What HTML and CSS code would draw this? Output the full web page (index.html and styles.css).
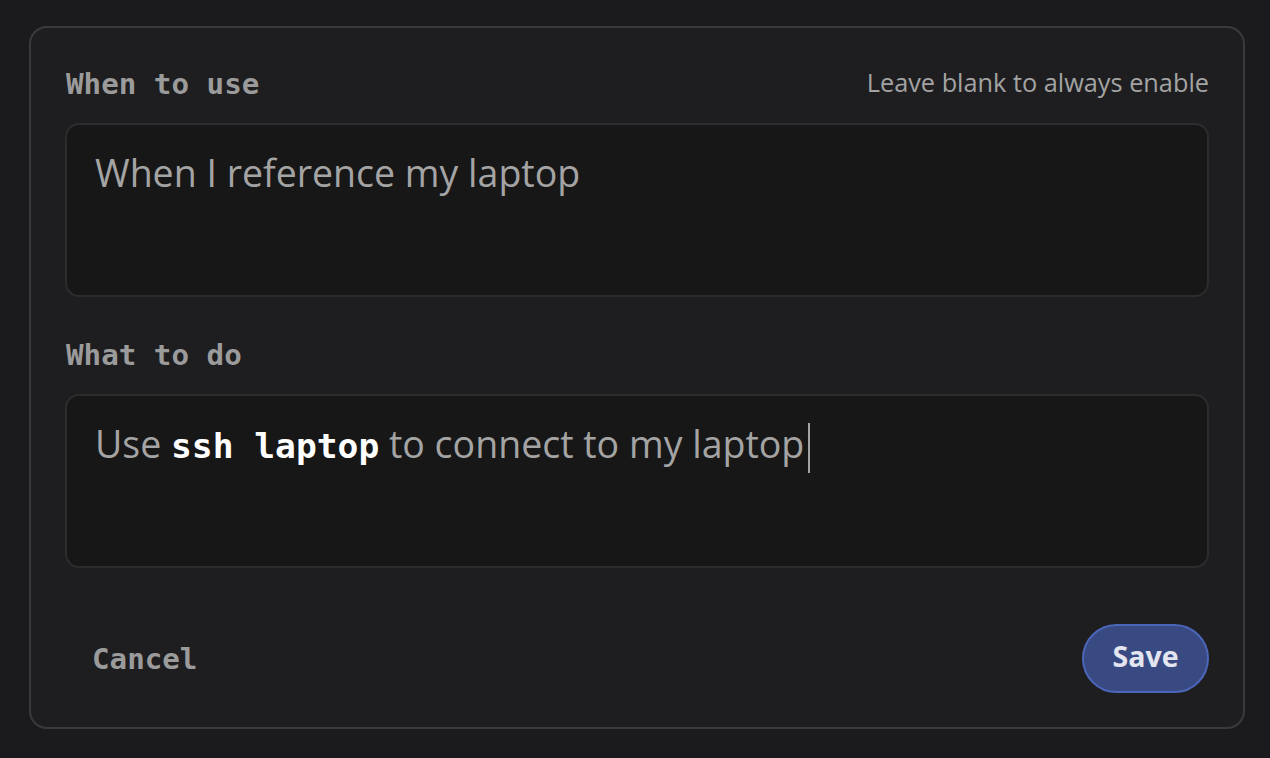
FILE: index.html
```html
<!DOCTYPE html>
<html>
<head>
<meta charset="utf-8">
<link rel="stylesheet" href="styles.css">
</head>
<body>
<div class="card">
  <div class="field">
    <div class="label-row">
      <span class="label">When to use</span>
      <span class="hint">Leave blank to always enable</span>
    </div>
    <div class="box"><span class="text">When I reference my laptop</span></div>
  </div>
  <div class="field second">
    <div class="label-row">
      <span class="label">What to do</span>
    </div>
    <div class="box"><span class="text">Use <code class="code">ssh laptop</code> to connect to my laptop</span><span class="caret"></span></div>
  </div>
  <div class="footer">
    <button class="btn-cancel">Cancel</button>
    <button class="btn-save">Save</button>
  </div>
</div>
</body>
</html>
```
FILE: styles.css
```css
html, body {
  margin: 0;
  padding: 0;
  background: #1b1b1d;
  width: 1270px;
  height: 758px;
  overflow: hidden;
}
.card {
  box-sizing: border-box;
  margin: 26px 0 0 29px;
  width: 1216px;
  height: 703px;
  border: 2px solid #3a3a3c;
  border-radius: 18px;
  background: #1e1e20;
  padding: 38px 34px 34px 34px;
  display: flex;
  flex-direction: column;
}
.label-row {
  display: flex;
  justify-content: space-between;
  align-items: center;
  height: 36px;
  margin-bottom: 21px;
}
.label {
  font-family: "DejaVu Sans Mono", monospace;
  font-weight: bold;
  font-size: 29.2px;
  color: #9b9b9b;
  padding-left: 1px;
}
.hint {
  font-family: "Open Sans", sans-serif;
  font-size: 25.3px;
  color: #a3a3a3;
  margin-top: -4px;
}
.box {
  box-sizing: border-box;
  height: 174px;
  border: 2px solid #2c2c2e;
  border-radius: 14px;
  background: #171717;
  padding: 21px 28px;
  font-family: "Open Sans", sans-serif;
  font-size: 37.5px;
  line-height: 54px;
  color: #a4a4a4;
}
.field.second {
  margin-top: 40px;
}
.code {
  font-family: "DejaVu Sans Mono", monospace;
  font-weight: bold;
  font-size: 34.6px;
  color: #ffffff;
}
.caret {
  display: inline-block;
  width: 2px;
  height: 50px;
  background: #a4a4a4;
  vertical-align: middle;
  margin-left: 4px;
}
.footer {
  margin-top: auto;
  display: flex;
  justify-content: space-between;
  align-items: center;
}
.btn-cancel {
  background: transparent;
  border: none;
  font-family: "DejaVu Sans Mono", monospace;
  font-weight: bold;
  font-size: 29.2px;
  color: #9b9b9b;
  padding: 0 27px;
  height: 69px;
}
.btn-save {
  box-sizing: border-box;
  width: 127px;
  height: 69px;
  border-radius: 35px;
  background: #394a83;
  border: 2px solid #4b66b8;
  color: #e3e6f0;
  font-family: "Open Sans", sans-serif;
  font-weight: bold;
  font-size: 28.5px;
  line-height: 1;
  padding: 0 0 4px 0;
}
```
